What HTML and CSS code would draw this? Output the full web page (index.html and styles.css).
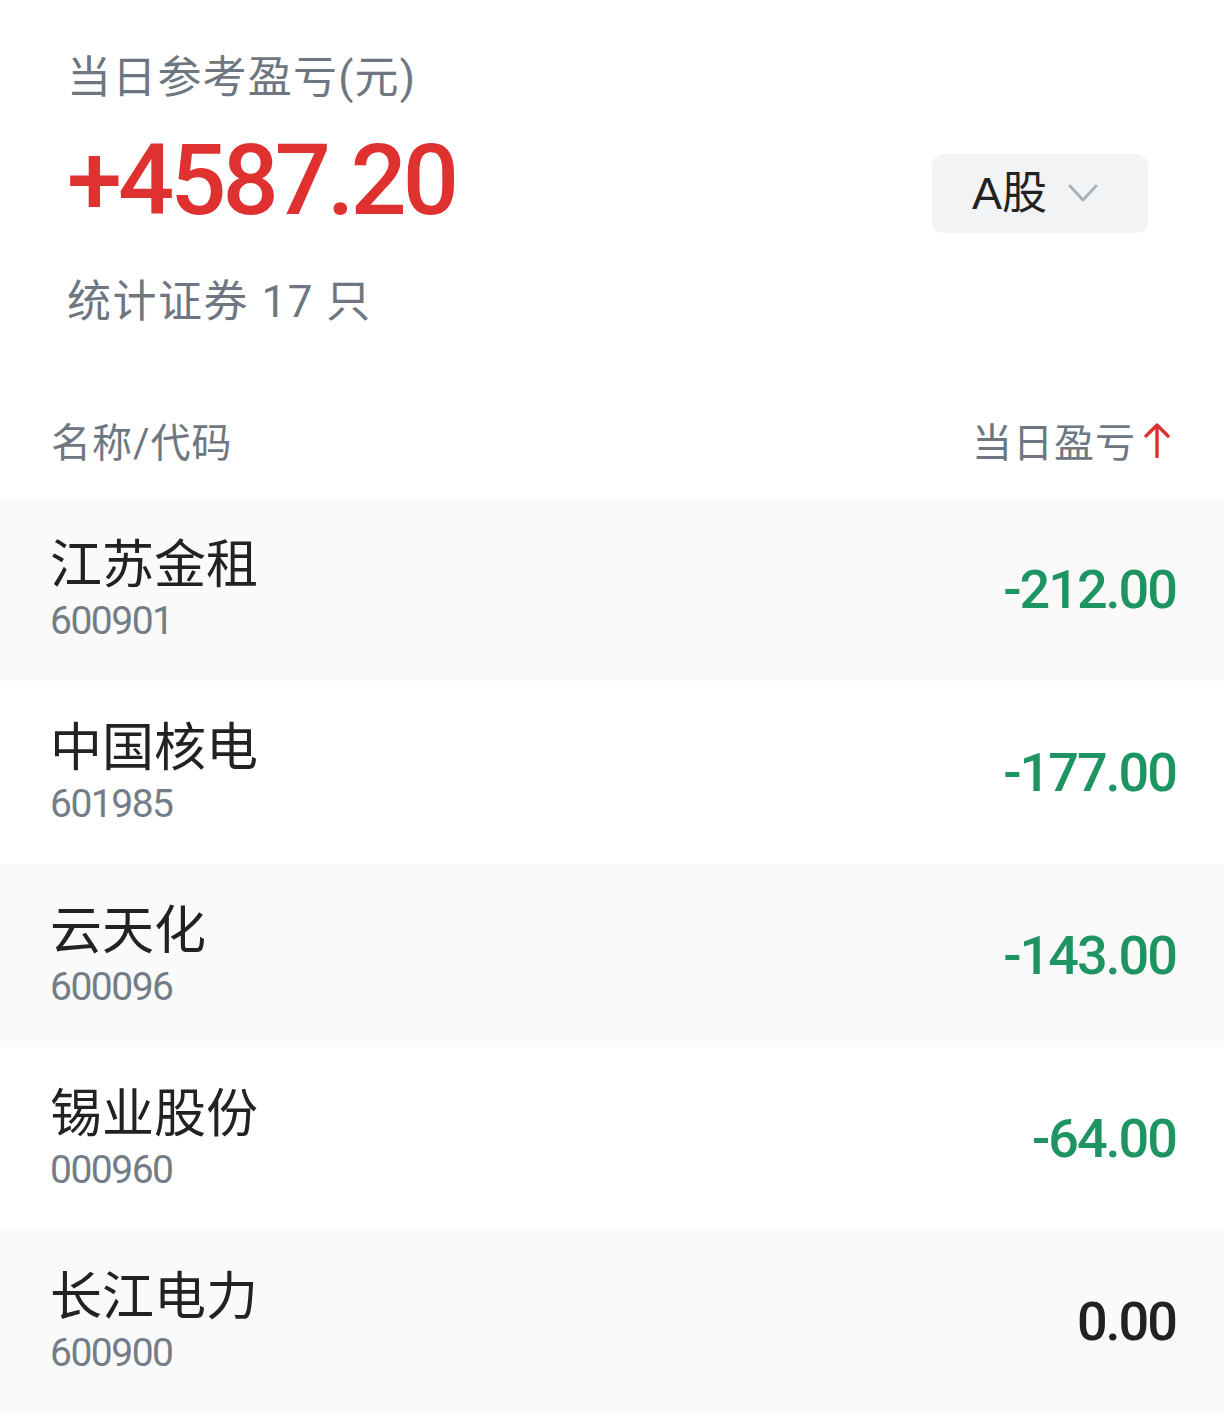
FILE: index.html
```html
<!DOCTYPE html>
<html lang="zh-CN">
<head>
<meta charset="utf-8">
<title>当日参考盈亏</title>
<link rel="stylesheet" href="styles.css">
</head>
<body>
<div class="page">
  <section class="summary">
    <div class="summary-main">
      <div class="label">当日参考盈亏(元)</div>
      <div class="total">+4587.20</div>
      <div class="count">统计证券 17 只</div>
    </div>
    <button class="market">
      <span class="market-text">A股</span>
      <svg class="chevron" width="30" height="19" viewBox="0 0 30 19"><path d="M2 2 L15 16 L28 2" fill="none" stroke="#a9b1b9" stroke-width="3" stroke-linecap="round" stroke-linejoin="round"/></svg>
    </button>
  </section>

  <div class="list-head">
    <span class="col-name">名称/代码</span>
    <span class="col-pl">当日盈亏<svg class="arrow" width="26" height="36" viewBox="0 0 26 36"><path d="M13 35 V3 M2 14 L13 3 L24 14" fill="none" stroke="#e03131" stroke-width="3.4" stroke-linecap="round" stroke-linejoin="round"/></svg></span>
  </div>

  <ul class="rows">
    <li class="row">
      <div class="stock"><div class="name">江苏金租</div><div class="code">600901</div></div>
      <div class="value down">-212.00</div>
    </li>
    <li class="row">
      <div class="stock"><div class="name">中国核电</div><div class="code">601985</div></div>
      <div class="value down">-177.00</div>
    </li>
    <li class="row">
      <div class="stock"><div class="name">云天化</div><div class="code">600096</div></div>
      <div class="value down">-143.00</div>
    </li>
    <li class="row">
      <div class="stock"><div class="name">锡业股份</div><div class="code">000960</div></div>
      <div class="value down">-64.00</div>
    </li>
    <li class="row">
      <div class="stock"><div class="name">长江电力</div><div class="code">600900</div></div>
      <div class="value flat">0.00</div>
    </li>
  </ul>
</div>
</body>
</html>
```
FILE: styles.css
```css
* { box-sizing: border-box; }
html, body { margin: 0; padding: 0; background: #ffffff; }
body {
  font-family: Roboto, "Noto Sans CJK SC", sans-serif;
  color: #222222;
}
.page { width: 1224px; }

.summary {
  display: flex;
  justify-content: space-between;
  align-items: flex-start;
  padding: 48px 76px 0 67px;
}
.summary-main { display: flex; flex-direction: column; }
.label {
  font-size: 44px;
  line-height: 60px;
  letter-spacing: 1.2px;
  color: #6e7781;
}
.total {
  font-family: Roboto, sans-serif;
  font-weight: 500;
  font-size: 99px;
  line-height: 110px;
  letter-spacing: -4px;
  color: #e03131;
  margin-top: 17px;
}
.count {
  font-size: 44px;
  line-height: 60px;
  letter-spacing: 1.5px;
  color: #6e7781;
  margin-top: 37px;
}

.market {
  display: flex;
  align-items: center;
  gap: 24px;
  margin-top: 106px;
  width: 216px;
  height: 79px;
  padding: 0 0 0 40px;
  border: none;
  border-radius: 12px;
  background: #f2f3f5;
  font-family: "Liberation Sans", "Noto Sans CJK SC", sans-serif;
  font-size: 45px;
  color: #222222;
}
.market-text { line-height: 1; }
.chevron { display: block; margin-left: -3px; }

.list-head {
  display: flex;
  justify-content: space-between;
  align-items: center;
  padding: 0 54px 20px 51px;
  margin-top: 70px;
  height: 96px;
  font-size: 40px;
  color: #6e7781;
}
.col-name { letter-spacing: 1px; }
.col-pl { display: flex; align-items: center; gap: 8px; letter-spacing: 1px; }
.arrow { display: block; }

.rows { list-style: none; margin: 0; padding: 0; }
.row {
  display: flex;
  justify-content: space-between;
  align-items: center;
  height: 183px;
  padding: 0 48px 0 50px;
}
.row:nth-child(odd) { background: #fafafa; }
.stock { display: flex; flex-direction: column; }
.name {
  font-size: 52px;
  line-height: 58px;
  color: #222222;
}
.code {
  font-family: Roboto, sans-serif;
  font-size: 39px;
  line-height: 44px;
  letter-spacing: -1.5px;
  color: #737d87;
  margin-top: 4px;
}
.value {
  font-family: Roboto, sans-serif;
  font-weight: 500;
  font-size: 54px;
  letter-spacing: -2px;
}
.value.down { color: #1e9463; }
.value.flat { color: #222222; }
```
